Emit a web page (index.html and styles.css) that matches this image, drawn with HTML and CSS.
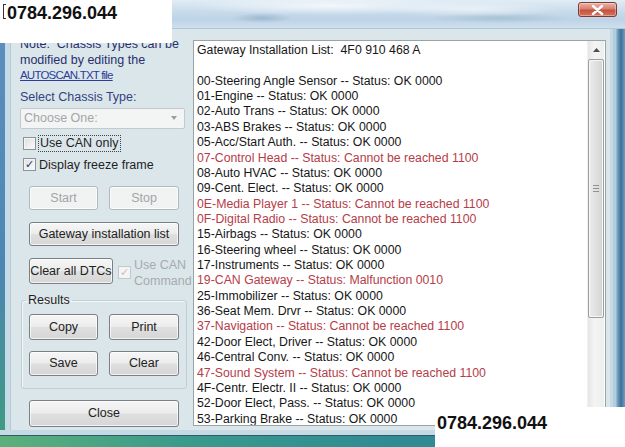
FILE: index.html
```html
<!DOCTYPE html>
<html>
<head>
<meta charset="utf-8">
<link rel="stylesheet" href="styles.css">
</head>
<body>
<div class="screen">
  <div class="titlebar">
    <div class="close-btn"><svg width="13" height="10" viewBox="0 0 13 10"><path d="M2 1 L11 9 M11 1 L2 9" stroke="#fff" stroke-width="2.4" stroke-linecap="round"/></svg></div>
  </div>
  <div class="middle">
    <div class="frame-left"></div>
    <div class="client">
      <div class="panel">
        <p class="note">Note:&nbsp; Chassis Types can be<br>modified by editing the<br><a class="link">AUTOSCAN.TXT file</a></p>
        <div class="label">Select Chassis Type:</div>
        <div class="select"><span>Choose One:</span><span class="arrow"></span></div>
        <div class="check first"><span class="box"></span><span class="focus">Use CAN only</span></div>
        <div class="check second"><span class="box checked">✓</span><span>Display freeze frame</span></div>
        <div class="btn-row start-row">
          <button class="btn half" disabled>Start</button>
          <button class="btn half" disabled>Stop</button>
        </div>
        <button class="btn wide gateway">Gateway installation list</button>
        <div class="dtc-row">
          <button class="btn dtc">Clear all DTCs</button>
          <span class="box checked off">✓</span>
          <span class="gray">Use CAN<br>Command</span>
        </div>
        <fieldset class="results">
          <legend>Results</legend>
          <div class="btn-row">
            <button class="btn half tall">Copy</button>
            <button class="btn half tall">Print</button>
          </div>
          <div class="btn-row second-pair">
            <button class="btn half">Save</button>
            <button class="btn half">Clear</button>
          </div>
        </fieldset>
        <button class="btn wide close">Close</button>
      </div>
      <div class="listbox">
        <div class="list">
          <div>Gateway Installation List:  4F0 910 468 A</div>
          <div>&nbsp;</div>
          <div>00-Steering Angle Sensor -- Status: OK 0000</div>
          <div>01-Engine -- Status: OK 0000</div>
          <div>02-Auto Trans -- Status: OK 0000</div>
          <div>03-ABS Brakes -- Status: OK 0000</div>
          <div>05-Acc/Start Auth. -- Status: OK 0000</div>
          <div class="err">07-Control Head -- Status: Cannot be reached 1100</div>
          <div>08-Auto HVAC -- Status: OK 0000</div>
          <div>09-Cent. Elect. -- Status: OK 0000</div>
          <div class="err">0E-Media Player 1 -- Status: Cannot be reached 1100</div>
          <div class="err">0F-Digital Radio -- Status: Cannot be reached 1100</div>
          <div>15-Airbags -- Status: OK 0000</div>
          <div>16-Steering wheel -- Status: OK 0000</div>
          <div>17-Instruments -- Status: OK 0000</div>
          <div class="err">19-CAN Gateway -- Status: Malfunction 0010</div>
          <div>25-Immobilizer -- Status: OK 0000</div>
          <div>36-Seat Mem. Drvr -- Status: OK 0000</div>
          <div class="err">37-Navigation -- Status: Cannot be reached 1100</div>
          <div>42-Door Elect, Driver -- Status: OK 0000</div>
          <div>46-Central Conv. -- Status: OK 0000</div>
          <div class="err">47-Sound System -- Status: Cannot be reached 1100</div>
          <div>4F-Centr. Electr. II -- Status: OK 0000</div>
          <div>52-Door Elect, Pass. -- Status: OK 0000</div>
          <div>53-Parking Brake -- Status: OK 0000</div>
        </div>
        <div class="scrollbar">
          <div class="sb-up"><svg width="7" height="4" viewBox="0 0 7 4"><path d="M0 4 L3.5 0 L7 4 Z" fill="#4d4d4d"/></svg></div>
          <div class="sb-thumb"><span class="grip"></span></div>
          <div class="sb-track"></div>
        </div>
      </div>
    </div>
    <div class="frame-right"></div>
  </div>
  <div class="bottom"></div>
  <div class="phone phone-top"><span class="caret"></span>0784.296.044</div>
  <div class="phone phone-bottom">0784.296.044</div>
</div>
</body>
</html>
```
FILE: styles.css
```css
* { box-sizing: border-box; }
html, body { margin: 0; padding: 0; }
body {
  width: 625px;
  height: 447px;
  overflow: hidden;
  font-family: "Liberation Sans", Arial, sans-serif;
  font-size: 12.5px;
  color: #1f1f1f;
  background: #3d8c8e;
}
.screen {
  position: relative;
  width: 625px;
  height: 447px;
  display: flex;
  flex-direction: column;
}
.titlebar {
  height: 29px;
  flex: none;
  display: flex;
  justify-content: flex-end;
  align-items: flex-start;
  padding-right: 8px;
  background:
    radial-gradient(ellipse 30px 5px at 262px 18px, rgba(120,150,175,0.45), rgba(120,150,175,0)),
    radial-gradient(ellipse 70px 5px at 500px 18px, rgba(130,160,185,0.35), rgba(130,160,185,0)),
    radial-gradient(ellipse 140px 9px at 330px 6px, rgba(255,255,255,0.7), rgba(255,255,255,0)),
    radial-gradient(ellipse 90px 8px at 470px 9px, rgba(255,255,255,0.55), rgba(255,255,255,0)),
    linear-gradient(180deg, #e1ecf5 0%, #c6daea 45%, #bdd3e6 70%, #cfe0ed 100%);
  border-bottom: 1px solid #aec7d9;
}
.close-btn {
  width: 39px;
  height: 15px;
  margin-top: 2px;
  border: 1px solid #7e3b32;
  border-radius: 3px;
  background: linear-gradient(180deg, #eab2a6 0%, #d9806f 45%, #c4513e 55%, #d4735b 100%);
  display: flex;
  align-items: center;
  justify-content: center;
  box-shadow: inset 0 0 0 1px rgba(255,255,255,0.35);
}
.middle {
  height: 401px;
  flex: none;
  display: flex;
}
.frame-left {
  width: 11px;
  background:
    linear-gradient(90deg, transparent 0 5px, #c7dbe7 5px 10px, #b3c9d6 10px),
    linear-gradient(180deg, #5c8fbe 0%, #4d86b3 60%, #3f9a83 100%);
}
.client {
  flex: 1;
  display: flex;
  padding-right: 4px;
  background: #dbe6eb;
}
.frame-right {
  width: 15px;
  background: linear-gradient(90deg, #c6dae5 0 3px, #b3cddd 3px 6px, #7aa6c8 7px, #3f6f98 11px, #6f9fc4 15px);
}
.bottom {
  flex: 1;
  background:
    linear-gradient(180deg, #c6dae5 0 5px, #2f5a6a 5px 6px, transparent 6px),
    linear-gradient(90deg, #5cb07a 0%, #3a9a8c 30%, #2f8a94 65%, #3d8f9a 100%);
}

/* left panel */
.panel {
  width: 182px;
  flex: none;
  padding: 8px 0 0 9px;
  display: flex;
  flex-direction: column;
  align-items: flex-start;
}
.note {
  margin: 0;
  line-height: 15.5px;
  color: #27306b;
  white-space: nowrap;
}
.link {
  color: #2c3d9a;
  text-decoration: underline;
  font-size: 11.5px;
  letter-spacing: -0.8px;
}
.label {
  margin-top: 6px;
  line-height: 15px;
  color: #33437f;
}
.select {
  margin-top: 3px;
  width: 165px;
  height: 21px;
  border: 1px solid #c3c9cc;
  border-radius: 2px;
  background: #f3f4f4;
  display: flex;
  align-items: center;
  justify-content: space-between;
  padding: 0 7px 0 3px;
  color: #a3a6a8;
}
.arrow {
  width: 0;
  height: 0;
  border-left: 3.5px solid transparent;
  border-right: 3.5px solid transparent;
  border-top: 4px solid #9a9ea1;
}
.check {
  display: flex;
  align-items: center;
  gap: 3px;
  margin-left: 3px;
  height: 16px;
}
.check.first { margin-top: 7px; }
.check.second { margin-top: 5px; }
.box {
  width: 13px;
  height: 13px;
  flex: none;
  border: 1px solid #8d9499;
  background: linear-gradient(135deg, #dcdfe2, #fbfbfb);
  box-shadow: inset 0 0 0 1px #f4f4f4;
  display: inline-flex;
  align-items: center;
  justify-content: center;
  font-size: 11px;
  line-height: 1;
  color: #243a6e;
  font-family: "DejaVu Sans", sans-serif;
}
.box.off {
  border-color: #c4c8ca;
  background: #f3f4f4;
  color: #d6b8c0;
}
.focus {
  outline: 1px dotted #444;
  outline-offset: 0;
  padding: 0 1px;
  line-height: 15px;
}
.btn {
  font-family: "Liberation Sans", Arial, sans-serif;
  font-size: 12.5px;
  color: #222;
  height: 24px;
  padding: 0;
  border: 1px solid #7b8084;
  border-radius: 3px;
  background: linear-gradient(180deg, #f6f6f6 0%, #ececec 48%, #dfdfdf 52%, #d6d6d6 100%);
  box-shadow: inset 0 0 0 1px rgba(255,255,255,0.7);
  display: flex;
  align-items: center;
  justify-content: center;
}
.btn:disabled {
  color: #a2a5a7;
  border-color: #b3b8bb;
  background: #f1f2f2;
}
.btn-row {
  display: flex;
  gap: 11px;
  margin-left: 9px;
}
.start-row { margin-top: 13px; }
.half { width: 69px; }
.btn-row .half + .half { width: 70px; }
.wide {
  width: 150px;
  margin-left: 9px;
}
.gateway { margin-top: 12px; }
.dtc-row {
  display: flex;
  align-items: flex-start;
  margin-top: 12px;
  margin-left: 9px;
  height: 26px;
}
.dtc {
  width: 84px;
  height: 26px;
}
.dtc-row .box {
  margin: 8px 0 0 5px;
}
.gray {
  color: #a7abad;
  line-height: 16px;
  margin: -1px 0 0 3px;
  white-space: nowrap;
}
.results {
  margin: 9px 0 0 1px;
  padding: 6px 0 12px 7px;
  width: 166px;
  border: 1px solid #c3ced3;
  border-radius: 3px;
  box-shadow: inset 1px 1px 0 #f3f7f8;
  min-width: 0;
}
.results legend {
  padding: 0 2px;
  margin-left: -3px;
  line-height: 15px;
  color: #1f1f1f;
}
.results .btn-row { margin-left: 0; }
.tall { height: 26px; }
.second-pair { margin-top: 11px; }
.second-pair .btn { height: 25px; }
.close {
  margin-top: 11px;
  height: 27px;
}

/* list box */
.listbox {
  margin-top: 11px;
  width: 413px;
  height: 386px;
  border: 1px solid #9aa3a8;
  background: #fff;
  display: flex;
  overflow: hidden;
}
.list {
  flex: 1;
  padding: 2px 0 0 3px;
  font-size: 12.3px;
  line-height: 15.36px;
  color: #161616;
  overflow: hidden;
}
.list > div { white-space: pre; height: 15.36px; }
.list .err { color: #b53d48; }
.scrollbar {
  width: 17px;
  flex: none;
  margin-right: 1px;
  display: flex;
  flex-direction: column;
  background: linear-gradient(90deg, #e6e6e6, #f4f4f4 40%, #eeeeee);
  border-left: 1px solid #f0f0f0;
}
.sb-up {
  height: 18px;
  display: flex;
  align-items: center;
  justify-content: center;
}
.sb-thumb {
  height: 259px;
  border: 1px solid #9c9fa2;
  border-radius: 2px;
  background: linear-gradient(90deg, #ececec, #e0e0e0 50%, #d3d3d3);
  box-shadow: inset 0 0 0 1px #f7f7f7;
  display: flex;
  align-items: center;
  justify-content: center;
}
.grip {
  width: 6px;
  height: 7px;
  background: repeating-linear-gradient(180deg, #8e9294 0 1px, transparent 1px 3px);
}
.sb-track { flex: 1; }

/* overlays */
.phone {
  position: absolute;
  background: #fff;
  font-family: "Liberation Sans", Arial, sans-serif;
  font-weight: bold;
  font-size: 18px;
  color: #111;
  line-height: 20px;
}
.phone-top {
  left: 0;
  top: 0;
  width: 172px;
  height: 43px;
  padding: 3px 0 0 7px;
}
.caret {
  position: absolute;
  left: 3px;
  top: 4px;
  width: 3px;
  height: 15px;
  border: 1px solid #333;
  border-right: none;
}
.phone-bottom {
  left: 435px;
  top: 407px;
  width: 190px;
  height: 40px;
  padding: 6px 0 0 2px;
}
```
